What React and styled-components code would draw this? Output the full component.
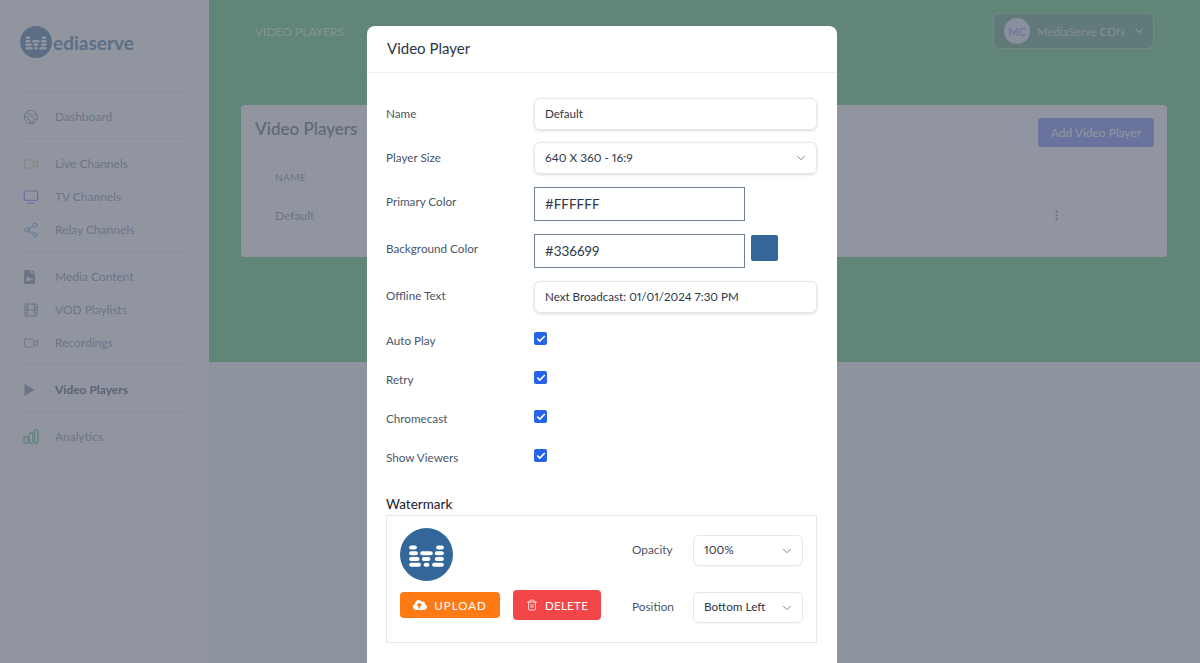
import React from 'react'
import styled, { createGlobalStyle } from 'styled-components'
import { ChevronDown, Check, Earth, Video, Share2, Film, Trash2, Tv2, MoreVertical } from 'lucide-react'
import { FaCloudUploadAlt } from 'react-icons/fa'

const FONT = '"Lato", "Open Sans", "Liberation Sans", sans-serif'

const GlobalStyle = createGlobalStyle`
  html, body { margin: 0; padding: 0; height: 100%; }
  body { font-family: ${FONT}; color: #2d3748; background: #fff; font-variant-numeric: proportional-nums; }
  * { box-sizing: border-box; }
`

const Page = styled.div`
  position: relative;
  display: flex;
  width: 1200px;
  height: 663px;
  overflow: hidden;
  background: #f7fafc;
`

const Sidebar = styled.aside`
  width: 209px;
  flex: none;
  padding: 26px 20px 0;
  background: #fff;
`

const Brand = styled.div`
  display: flex;
  align-items: center;
  height: 32px;
  margin-bottom: 33px;
`

const BrandName = styled.span`
  margin-left: 1px;
  font-size: 19px;
  font-weight: 700;
  color: #336699;
`

const NavSection = styled.div`
  padding: 8px 0 5px;
  border-top: 1px solid #e2e8f0;
  &:first-of-type { padding-bottom: 6px; }
`

const NavItem = styled.div`
  display: flex;
  align-items: center;
  height: 33px;
  font-size: 12px;
  font-weight: ${p => (p.$active ? 700 : 400)};
  color: ${p => (p.$active ? '#2d3748' : '#718096')};
`

const NavIcon = styled.span`
  display: flex;
  width: 22px;
  margin-right: 13px;
  padding-left: 3px;
  color: ${p => p.$color};
`

const Main = styled.main`
  flex: 1;
`

const Header = styled.div`
  height: 362px;
  padding: 13px 33px 0 32px;
  background: rgb(70, 195, 95);
`

const TopBar = styled.div`
  display: flex;
  align-items: center;
  justify-content: space-between;
  height: 36px;
  padding: 0 13px 0 14px;
`

const PageTitle = styled.span`
  font-size: 12px;
  color: rgba(255, 255, 255, 0.75);
`

const Account = styled.div`
  display: flex;
  align-items: center;
  width: 161px;
  height: 36px;
  padding: 0 10px;
  border: 1px solid rgba(255, 255, 255, 0.45);
  border-radius: 6px;
  background: rgba(60, 60, 120, 0.35);
  font-size: 11.5px;
  white-space: nowrap;
  color: rgba(255, 255, 255, 0.7);
`

const Avatar = styled.span`
  display: flex;
  flex: none;
  align-items: center;
  justify-content: center;
  width: 26px;
  height: 26px;
  margin-right: 7px;
  border-radius: 50%;
  background: #e2e8f0;
  font-size: 11px;
  color: #6875f5;
`

const AccountChevron = styled(ChevronDown)`
  flex: none;
  margin-left: 8px;
`

const Card = styled.section`
  height: 152px;
  margin-top: 56px;
  padding: 13px 13px 0 14px;
  border-radius: 4px;
  background: #fff;
`

const CardHead = styled.div`
  display: flex;
  align-items: center;
  justify-content: space-between;
  height: 29px;
  margin-bottom: 13px;
`

const CardTitle = styled.h2`
  margin: 0;
  padding-bottom: 8px;
  font-size: 17px;
  font-weight: 600;
  color: #4a5568;
`

const AddButton = styled.div`
  display: flex;
  align-items: center;
  justify-content: center;
  width: 116px;
  height: 29px;
  border-radius: 3px;
  background: #6875f5;
  font-size: 12px;
  color: #fff;
`

const Table = styled.div`
  margin-top: -1px;
  border: 1px solid #edf2f7;
  border-radius: 3px;
`

const TableRow = styled.div`
  display: flex;
  align-items: center;
  justify-content: space-between;
  height: ${p => (p.$head ? '34px' : '44px')};
  padding: 0 90px ${p => (p.$head ? 0 : 3)}px 19px;
  border-top: ${p => (p.$head ? 'none' : '1px solid #edf2f7')};
  font-size: ${p => (p.$head ? '10px' : '12px')};
  letter-spacing: ${p => (p.$head ? '0.4px' : '0')};
  color: #718096;
`

const Overlay = styled.div`
  position: absolute;
  inset: 0;
  background: rgba(107, 114, 128, 0.75);
`

const Modal = styled.div`
  position: absolute;
  top: 26px;
  left: 367px;
  width: 470px;
  border-radius: 8px;
  background: #fff;
`

const ModalHead = styled.div`
  height: 47px;
  padding: 0 20px;
  border-bottom: 1px solid #edf2f7;
  font-size: 15px;
  line-height: 45px;
  color: #2d3748;
`

const ModalBody = styled.div`
  padding: 25px 19px 48px 19px;
`

const Row = styled.div`
  display: flex;
  align-items: center;
  margin-bottom: ${p => p.$gap || 13}px;
`

const Label = styled.label`
  width: 148px;
  flex: none;
  padding-bottom: ${p => p.$bottom ?? 2}px;
  font-size: 11.7px;
  color: #4a5568;
`

const TextInput = styled.input`
  width: 283px;
  height: 32px;
  padding: 0 10px 2px;
  border: 1px solid #e2e8f0;
  border-radius: 6px;
  box-shadow: 0 1px 3px rgba(0, 0, 0, 0.14);
  outline: none;
  background: #fff;
  font-family: ${FONT};
  font-size: 11.6px;
  font-variant-numeric: proportional-nums;
  color: #2d3748;
`

const ColorInput = styled.input`
  width: 211px;
  height: 34px;
  padding: 0 10px;
  border: 1.3px solid #718096;
  outline: none;
  background: #fff;
  font-family: ${FONT};
  font-size: 13.5px;
  font-variant-numeric: proportional-nums;
  color: #2d3748;
`

const Swatch = styled.span`
  width: 27px;
  height: 26px;
  margin: 0 0 7px 6px;
  border-radius: 2px;
  background: #336699;
`

const SelectBox = styled.div`
  display: flex;
  align-items: center;
  justify-content: space-between;
  width: ${p => p.$width}px;
  height: ${p => p.$height || 32}px;
  padding: 0 8px 0 10px;
  border: 1px solid #e2e8f0;
  border-radius: 6px;
  box-shadow: ${p => (p.$flat ? '0 1px 1px rgba(0,0,0,.04)' : '0 1px 3px rgba(0, 0, 0, 0.14)')};
  font-size: 11.8px;
  color: #2d3748;
`

const SelectValue = styled.span`
  padding-bottom: 2px;
`

const CheckRow = styled.div`
  display: flex;
  align-items: center;
  height: 39px;
`

const CheckBox = styled.span`
  display: flex;
  align-items: center;
  justify-content: center;
  width: 13px;
  height: 13px;
  margin-bottom: 2px;
  border-radius: 2px;
  background: #2563eb;
  color: #fff;
`

const SectionTitle = styled.div`
  margin-top: 18px;
  height: 21px;
  font-size: 13.5px;
  line-height: 20px;
  color: #1a202c;
`

const WatermarkBox = styled.div`
  display: flex;
  justify-content: space-between;
  width: 431px;
  height: 128px;
  padding: 12px 13px 0;
  border: 1px solid #e2e8f0;
`

const WatermarkLeft = styled.div`
  display: flex;
  flex-direction: column;
  align-items: flex-start;
`

const ButtonRow = styled.div`
  display: flex;
  align-items: center;
  gap: 13px;
  height: 30px;
  margin-top: 9px;
`

const ActionButton = styled.div`
  display: flex;
  align-items: center;
  justify-content: center;
  gap: 7px;
  width: ${p => p.$width}px;
  height: ${p => p.$height}px;
  border-radius: 4px;
  background: ${p => p.$bg};
  font-size: 11.5px;
  letter-spacing: ${p => p.$spacing}px;
  color: #fff;
`

const WatermarkRight = styled.div`
  display: grid;
  grid-template-columns: 61px 110px;
  grid-auto-rows: 31px;
  row-gap: 26px;
  align-items: center;
  padding-top: 7px;
`

const SmallLabel = styled.span`
  padding-bottom: 2px;
  font-size: 11.8px;
  color: #4a5568;
`

const LogoMark = ({ size }) => {
  const bars = [
    [27, 52, 23], [107, 52, 23],
    [27, 69, 26], [60, 69, 37], [103, 69, 27],
    [27, 86, 31], [65, 86, 25], [103, 86, 27],
    [27, 103, 35], [70, 103, 17], [95, 103, 35],
  ]
  return (
    <svg width={size} height={size} viewBox="0 0 157 157">
      <circle cx="78.5" cy="78.5" r="78.5" fill="#336699" />
      {bars.map(([x, y, w]) => (
        <rect key={`${x}-${y}`} x={x} y={y} width={w} height="12" rx="6" fill="#fff" />
      ))}
    </svg>
  )
}

const FileVideoIcon = () => (
  <svg width="12" height="14" viewBox="-1 0 12 14">
    <path fill="currentColor" d="M1.500 0H7v3.500h4V12.500A1.500 1.500 0 0 1 9.500 14h-8A1.500 1.500 0 0 1 0 12.500v-11A1.500 1.500 0 0 1 1.500 0zM8 0l3 2.500H8z" />
    <rect x="2.500" y="7.500" width="3.500" height="3.500" rx=".6" fill="#fff" />
    <path d="M6.500 9l2-1.300v3.100l-2-1.200z" fill="#fff" />
  </svg>
)

const PlayIcon = () => (
  <svg width="12" height="12" viewBox="-1 0 12 12">
    <path fill="currentColor" d="M.5 0v12l10-6z" />
  </svg>
)

const BarsIcon = () => (
  <svg width="16" height="15" viewBox="0 0 16 15" fill="none" stroke="currentColor" strokeWidth="1.400">
    <rect x="1" y="7.500" width="3.600" height="6.800" rx="1.500" />
    <rect x="6.200" y="4" width="3.600" height="10.300" rx="1.500" />
    <rect x="11.400" y=".8" width="3.600" height="13.500" rx="1.500" />
  </svg>
)

const navSections = [
  [{ label: 'Dashboard', color: '#718096', icon: <Earth size={16} strokeWidth={1.5} /> }],
  [
    { label: 'Live Channels', color: '#f6ad55', icon: <Video size={16} strokeWidth={1.5} /> },
    { label: 'TV Channels', color: '#9f5aea', icon: <Tv2 size={16} strokeWidth={1.8} /> },
    { label: 'Relay Channels', color: '#4299e1', icon: <Share2 size={16} strokeWidth={1.5} /> },
  ],
  [
    { label: 'Media Content', color: '#718096', icon: <FileVideoIcon /> },
    { label: 'VOD Playlists', color: '#718096', icon: <Film size={16} strokeWidth={1.5} /> },
    { label: 'Recordings', color: '#718096', icon: <Video size={16} strokeWidth={1.5} /> },
  ],
  [{ label: 'Video Players', color: '#718096', active: true, icon: <PlayIcon /> }],
  [{ label: 'Analytics', color: '#48bb78', icon: <BarsIcon /> }],
]

const checks = ['Auto Play', 'Retry', 'Chromecast', 'Show Viewers']

export default function App() {
  return (
    <>
      <GlobalStyle />
      <Page>
        <Sidebar>
          <Brand>
            <LogoMark size={32} />
            <BrandName>ediaserve</BrandName>
          </Brand>
          {navSections.map(section => (
            <NavSection key={section[0].label}>
              {section.map(item => (
                <NavItem key={item.label} $active={item.active}>
                  <NavIcon $color={item.color}>{item.icon}</NavIcon>
                  {item.label}
                </NavItem>
              ))}
            </NavSection>
          ))}
        </Sidebar>

        <Main>
          <Header>
            <TopBar>
              <PageTitle>VIDEO PLAYERS</PageTitle>
              <Account>
                <Avatar>MC</Avatar>
                MediaServe CDN
                <AccountChevron size={12} strokeWidth={2.5} />
              </Account>
            </TopBar>
            <Card>
              <CardHead>
                <CardTitle>Video Players</CardTitle>
                <AddButton>Add Video Player</AddButton>
              </CardHead>
              <Table>
                <TableRow $head>NAME</TableRow>
                <TableRow>
                  Default
                  <MoreVertical size={13} color="#4a5568" />
                </TableRow>
              </Table>
            </Card>
          </Header>
        </Main>

        <Overlay />

        <Modal>
          <ModalHead>Video Player</ModalHead>
          <ModalBody>
            <Row $gap={12}>
              <Label>Name</Label>
              <TextInput readOnly value="Default" />
            </Row>
            <Row>
              <Label>Player Size</Label>
              <SelectBox $width={283}>
                <SelectValue>640 X 360 - 16:9</SelectValue>
                <ChevronDown size={14} strokeWidth={1.5} color="#6b7280" />
              </SelectBox>
            </Row>
            <Row>
              <Label $bottom={6}>Primary Color</Label>
              <ColorInput readOnly value="#FFFFFF" />
            </Row>
            <Row>
              <Label $bottom={6}>Background Color</Label>
              <ColorInput readOnly value="#336699" />
              <Swatch />
            </Row>
            <Row $gap={7}>
              <Label $bottom={4}>Offline Text</Label>
              <TextInput readOnly value="Next Broadcast: 01/01/2024 7:30 PM" />
            </Row>
            {checks.map(label => (
              <CheckRow key={label}>
                <Label $bottom={0}>{label}</Label>
                <CheckBox>
                  <Check size={10} strokeWidth={4} />
                </CheckBox>
              </CheckRow>
            ))}
            <SectionTitle>Watermark</SectionTitle>
            <WatermarkBox>
              <WatermarkLeft>
                <LogoMark size={53} />
                <ButtonRow>
                  <ActionButton $width={100} $height={26} $bg="#fd7a14" $spacing={1}>
                    <FaCloudUploadAlt size={14} />
                    UPLOAD
                  </ActionButton>
                  <ActionButton $width={88} $height={30} $bg="#f24649" $spacing={0.3}>
                    <Trash2 size={12} strokeWidth={1.5} />
                    DELETE
                  </ActionButton>
                </ButtonRow>
              </WatermarkLeft>
              <WatermarkRight>
                <SmallLabel>Opacity</SmallLabel>
                <SelectBox $width={110} $height={31} $flat>
                  <SelectValue>100%</SelectValue>
                  <ChevronDown size={14} strokeWidth={1.5} color="#6b7280" />
                </SelectBox>
                <SmallLabel>Position</SmallLabel>
                <SelectBox $width={110} $height={31} $flat>
                  <SelectValue>Bottom Left</SelectValue>
                  <ChevronDown size={14} strokeWidth={1.5} color="#6b7280" />
                </SelectBox>
              </WatermarkRight>
            </WatermarkBox>
          </ModalBody>
        </Modal>
      </Page>
    </>
  )
}
